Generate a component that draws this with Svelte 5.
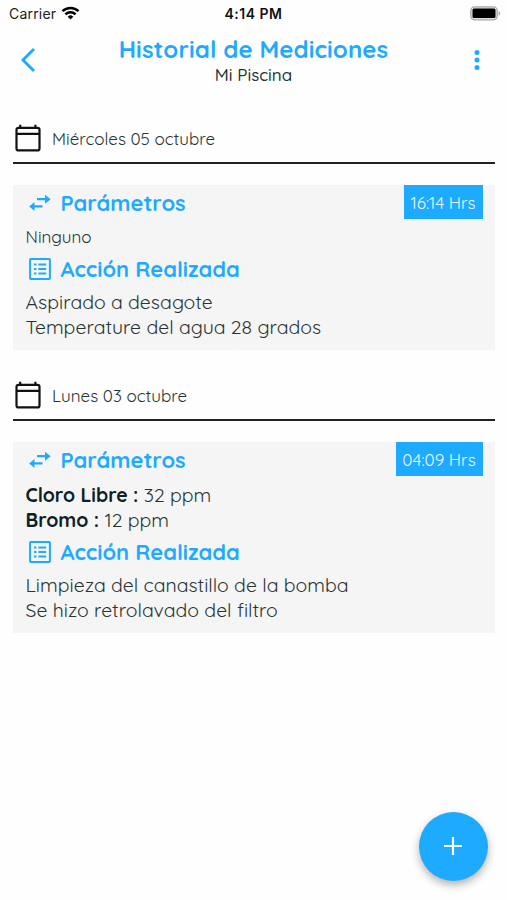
<script lang="ts">
  type Reading = { name: string; value: string };

  type Entry = {
    date: string;
    time: string;
    readings: Reading[];
    actions: string[];
  };

  const entries: Entry[] = [
    {
      date: 'Miércoles 05 octubre',
      time: '16:14 Hrs',
      readings: [],
      actions: ['Aspirado a desagote', 'Temperature del agua 28 grados'],
    },
    {
      date: 'Lunes 03 octubre',
      time: '04:09 Hrs',
      readings: [
        { name: 'Cloro Libre', value: '32 ppm' },
        { name: 'Bromo', value: '12 ppm' },
      ],
      actions: ['Limpieza del canastillo de la bomba', 'Se hizo retrolavado del filtro'],
    },
  ];
</script>

<div class="screen">
  <div class="status">
    <div class="carrier">
      <span>Carrier</span>
      <svg width="19" height="14" viewBox="0 0 18 14" fill="none" stroke="#000" stroke-width="2.5">
        <path d="M1 5.2a11.5 11.5 0 0 1 16 0" />
        <path d="M3.9 8.3a7.3 7.3 0 0 1 10.2 0" />
        <path d="M6.2 10.7a4 4 0 0 1 5.6 0L9 13.5z" fill="#000" stroke="none" />
      </svg>
    </div>
    <span class="clock">4:14 PM</span>
    <svg class="battery" width="31" height="15" viewBox="0 0 31 15">
      <rect x="0.8" y="0.8" width="26.4" height="13" rx="3.8" fill="#ddd" stroke="#aaa" stroke-width="1.3" />
      <rect x="2.5" y="2.5" width="23" height="9.6" rx="1.6" fill="#000" />
      <path d="M28.6 5v4.6c2.2-.8 2.2-3.8 0-4.6z" fill="#aaa" />
    </svg>
  </div>

  <header>
    <button class="back" aria-label="Volver">
      <svg width="16" height="26" viewBox="0 0 16 26" fill="none" stroke="#1eaaff" stroke-width="2.9">
        <path d="M14 2L3 13l11 11" />
      </svg>
    </button>
    <div class="heading">
      <h1>Historial de Mediciones</h1>
      <p>Mi Piscina</p>
    </div>
    <button class="more" aria-label="Opciones">
      <svg width="6" height="20" viewBox="0 0 6 20" fill="#1eaaff">
        <circle cx="3" cy="2.6" r="2.5" />
        <circle cx="3" cy="10" r="2.5" />
        <circle cx="3" cy="17.4" r="2.5" />
      </svg>
    </button>
  </header>

  <main>
    {#each entries as entry (entry.date)}
      <section>
        <div class="day">
          <svg width="26" height="28" viewBox="0 0 26 28" fill="none" stroke="#111" stroke-width="2.2">
            <rect x="1.5" y="3.8" width="23" height="22.6" rx="2" />
            <path d="M1.5 9.8h23M5.2 0.8v3M20.4 0.8v3" />
          </svg>
          <span>{entry.date}</span>
        </div>
        <article>
          <span class="time" class:wide={entry.time.startsWith('0')}>{entry.time}</span>
          <h2>
            <svg width="22" height="18" viewBox="0 0 22 18" fill="#1eaaff">
              <path d="M8 4.1h8V.7l5.7 4.5L16 9.7V6.3H8z" />
              <path d="M13.5 11.3h-8V7.9L.2 12.4l5.3 4.5v-3.4h8z" />
            </svg>
            <span>Parámetros</span>
          </h2>
          {#if entry.readings.length}
            <ul class="readings">
              {#each entry.readings as r (r.name)}
                <li><b>{r.name} :</b> {r.value}</li>
              {/each}
            </ul>
          {:else}
            <p class="none">Ninguno</p>
          {/if}
          <h2>
            <svg width="22" height="22" viewBox="0 0 22 22" fill="none" stroke="#1eaaff" stroke-width="2">
              <rect x="1.1" y="1.1" width="19.8" height="19.8" rx="0.6" />
              <path d="M5 6.5h2.4M5 11h2.4M5 15.5h2.4M9.4 6.5h7.8M9.4 11h7.8M9.4 15.5h7.8" />
            </svg>
            <span>Acción Realizada</span>
          </h2>
          <ul class="actions">
            {#each entry.actions as action}
              <li>{action}</li>
            {/each}
          </ul>
        </article>
      </section>
    {/each}
  </main>

  <button class="fab" aria-label="Agregar">
    <svg width="18" height="18" viewBox="0 0 18 18" stroke="#fff" stroke-width="2.2">
      <path d="M9 0v18M0 9h18" />
    </svg>
  </button>
</div>

<style>
  :global(body) {
    background: #fefefe;
  }
  .screen {
    position: relative;
    box-sizing: border-box;
    width: 507px;
    height: 900px;
    overflow: hidden;
    font-family: Quicksand, Lato, sans-serif;
    color: #283434;
  }
  h1,
  h2,
  p,
  ul {
    margin: 0;
    padding: 0;
  }
  ul {
    list-style: none;
  }
  svg {
    display: block;
    flex: none;
  }
  button {
    display: flex;
    align-items: center;
    justify-content: center;
    padding: 0;
    border: 0;
    background: none;
  }

  .status {
    display: grid;
    grid-template-columns: 1fr auto 1fr;
    align-items: center;
    height: 28px;
    padding: 0 6px 0 9px;
    font-family: Inter, sans-serif;
    font-size: 14px;
    color: #222;
  }
  .carrier {
    display: flex;
    align-items: center;
    gap: 5px;
    letter-spacing: 0.2px;
  }
  .carrier span,
  .clock {
    padding-bottom: 2px;
  }
  .carrier svg {
    margin-top: -3px;
  }
  .clock {
    margin-right: 3px;
    font-weight: 600;
    letter-spacing: 0.5px;
    color: #111;
  }
  .battery {
    justify-self: end;
    margin-top: -2px;
  }

  header {
    display: grid;
    grid-template-columns: 60px 1fr 60px;
    height: 64px;
  }
  .back,
  .more {
    height: 63px;
  }
  .back {
    padding-right: 5px;
  }
  .heading {
    padding-top: 7px;
    text-align: center;
  }
  h1 {
    font-size: 24px;
    line-height: 28px;
    font-weight: 700;
    letter-spacing: 0.1px;
    color: #1eaaff;
  }
  .heading p {
    font-size: 17px;
    line-height: 24px;
    font-weight: 500;
  }

  main {
    padding: 22px 12px 0 13px;
  }
  section {
    margin-bottom: 21px;
  }
  .day {
    display: flex;
    align-items: center;
    gap: 11px;
    height: 48px;
    padding-left: 2px;
    border-bottom: 2px solid #222;
    font-size: 17px;
  }
  article {
    position: relative;
    margin-top: 21px;
    padding: 4px 12.5px 11px;
    background: #f5f5f5;
  }
  .time {
    position: absolute;
    top: 0;
    right: 12px;
    box-sizing: border-box;
    width: 79px;
    height: 34px;
    padding-right: 1px;
    background: #1eaaff;
    color: #e8f8ff;
    font-size: 17px;
    line-height: 35px;
    text-align: center;
  }
  .time.wide {
    width: 87px;
  }
  h2 {
    display: flex;
    align-items: center;
    gap: 10px;
    height: 28px;
    padding-left: 3px;
    font-size: 21.9px;
    font-weight: 700;
    color: #1eaaff;
  }
  h2 span {
    padding-bottom: 2px;
  }
  .none {
    font-size: 17px;
    line-height: 39px;
    height: 38px;
  }
  .readings {
    padding: 9px 0 6px;
  }
  li {
    font-size: 19.45px;
    line-height: 24.5px;
    white-space: nowrap;
  }
  b {
    color: #102020;
  }
  .actions {
    padding-top: 7px;
  }

  .fab {
    position: absolute;
    left: 418.5px;
    top: 811.5px;
    width: 69px;
    height: 69px;
    border-radius: 50%;
    background: #1eaaff;
    box-shadow: 0 4px 8px rgba(0, 0, 0, 0.3);
  }
</style>
